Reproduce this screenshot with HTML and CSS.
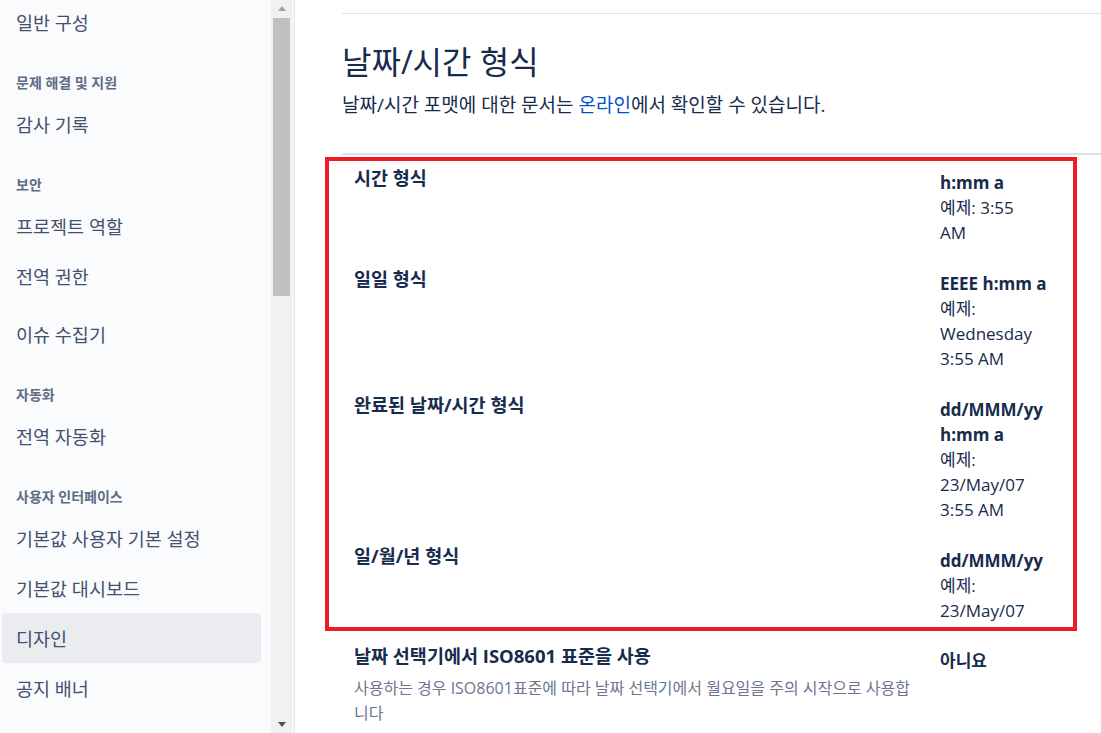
FILE: index.html
```html
<!DOCTYPE html>
<html lang="ko">
<head>
    <meta charset="utf-8">
    <title>날짜/시간 형식</title>
    <link rel="stylesheet" href="styles.css">
</head>
<body>
    <div class="layout">
        <!-- 사이드바 -->
        <aside class="sidebar">
            <nav class="nav">
                <a class="nav-item">일반 구성</a>
                <div class="nav-heading">문제 해결 및 지원</div>
                <a class="nav-item">감사 기록</a>
                <div class="nav-heading">보안</div>
                <a class="nav-item">프로젝트 역할</a>
                <a class="nav-item">전역 권한</a>
                <a class="nav-item spaced">이슈 수집기</a>
                <div class="nav-heading">자동화</div>
                <a class="nav-item">전역 자동화</a>
                <div class="nav-heading">사용자 인터페이스</div>
                <a class="nav-item">기본값 사용자 기본 설정</a>
                <a class="nav-item">기본값 대시보드</a>
                <a class="nav-item active">디자인</a>
                <a class="nav-item">공지 배너</a>
            </nav>
            <div class="scrollbar">
                <div class="sb-arrow up"></div>
                <div class="sb-thumb"></div>
                <div class="sb-arrow down"></div>
            </div>
        </aside>

        <!-- 본문 -->
        <main class="content">
            <div class="rule"></div>
            <h1>날짜/시간 형식</h1>
            <p class="intro">날짜/시간 포맷에 대한 문서는 <a href="#">온라인</a>에서 확인할 수 있습니다.</p>
            <div class="divider"></div>

            <div class="highlight">
                <div class="row">
                    <div class="label">시간 형식</div>
                    <div class="value"><b>h:mm a</b><br>예제: 3:55<br>AM</div>
                </div>
                <div class="row">
                    <div class="label">일일 형식</div>
                    <div class="value"><b>EEEE h:mm a</b><br>예제:<br>Wednesday<br>3:55 AM</div>
                </div>
                <div class="row">
                    <div class="label">완료된 날짜/시간 형식</div>
                    <div class="value"><b>dd/MMM/yy<br>h:mm a</b><br>예제:<br>23/May/07<br>3:55 AM</div>
                </div>
                <div class="row">
                    <div class="label">일/월/년 형식</div>
                    <div class="value"><b>dd/MMM/yy</b><br>예제:<br>23/May/07</div>
                </div>
            </div>

            <div class="row plain">
                <div class="label">
                    날짜 선택기에서 ISO8601 표준을 사용
                    <div class="desc">사용하는 경우 ISO8601표준에 따라 날짜 선택기에서 월요일을 주의 시작으로 사용합니다</div>
                </div>
                <div class="value"><b>아니요</b></div>
            </div>
        </main>
    </div>
</body>
</html>
```

FILE: styles.css
```css
body {
    margin: 0;
    height: 100vh;
    overflow: hidden;
    background: #fff;
    font-family: 'Open Sans', 'Noto Sans CJK KR', sans-serif;
    color: #172B4D;
}

.layout {
    display: flex;
    height: 100vh;
}

/* 사이드바 */
.sidebar {
    display: flex;
    width: 295px;
    flex-shrink: 0;
    border-right: 1px solid #e6e6e6;
    box-sizing: border-box;
}
.nav {
    width: 271px;
    background: #FAFBFC;
    padding: 0 10px 0 2px;
    box-sizing: border-box;
    margin-top: -3px;
}
.nav-item {
    display: flex;
    align-items: center;
    height: 50px;
    padding: 0 14px;
    border-radius: 4px;
    font-size: 18.5px;
    color: #42526E;
}
.nav-item.spaced { margin-top: 8px; }
.nav-item.active {
    background: #EBECF0;
}
.nav-heading {
    padding: 28px 14px 8px;
    line-height: 16px;
    font-size: 14px;
    font-weight: 600;
    color: #5E6C84;
}

/* 스크롤바 */
.scrollbar {
    position: relative;
    width: 21px;
    background: #F1F1F1;
    border-right: 2px solid #f7f7f7;
}
.sb-arrow {
    height: 17px;
    display: flex;
    justify-content: center;
    align-items: center;
}
.sb-arrow.up::after {
    content: '';
    border: 4px solid transparent;
    border-bottom: 5px solid #A3A3A3;
    border-top: 0;
}
.sb-arrow.down {
    position: absolute;
    bottom: 0;
    left: 0;
    right: 0;
}
.sb-arrow.down::after {
    content: '';
    border: 4px solid transparent;
    border-top: 5px solid #505050;
    border-bottom: 0;
}
.sb-thumb {
    margin: 1px 2px 0;
    height: 278px;
    background: #C1C1C1;
}

/* 본문 */
.content {
    flex: 1;
    padding: 13px 0 0 47px;
    min-width: 0;
}
.rule {
    height: 1px;
    background: #DFE1E6;
}
h1 {
    margin: 28px 0 0;
    font-size: 32px;
    line-height: 40px;
    font-weight: 400;
    color: #172B4D;
}
.intro {
    margin: 10px 0 0;
    font-size: 19px;
    line-height: 26px;
}
.intro a {
    color: #0052CC;
    text-decoration: none;
}
.divider {
    margin-top: 35px;
    height: 2px;
    background: #DFE1E6;
}

.highlight {
    margin: 2px 0 0 -17px;
    width: 752px;
    box-sizing: border-box;
    border: 4px solid #ED1C24;
    padding: 9px 0 4px 25px;
    display: flex;
    flex-direction: column;
    gap: 26px;
}
.row {
    display: grid;
    grid-template-columns: 566px 120px;
    column-gap: 20px;
}
.label {
    font-size: 18.5px;
    font-weight: 700;
    line-height: 16px;
}
.value {
    font-size: 17px;
    line-height: 25px;
}
.row.plain {
    padding: 17px 0 0 12px;
}
.desc {
    margin-top: 12px;
    font-size: 16px;
    font-weight: 400;
    line-height: 25px;
    color: #6B778C;
}
```
